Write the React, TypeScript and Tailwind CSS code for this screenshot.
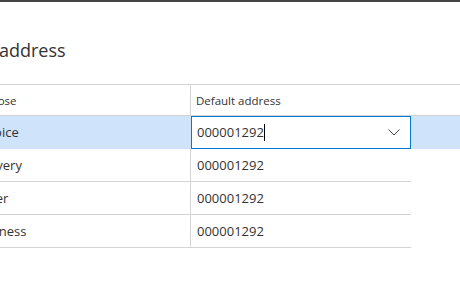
const rows = [
  { purpose: 'Delivery', address: '000001292' },
  { purpose: 'Other', address: '000001292' },
  { purpose: 'Business', address: '000001292' },
];

function Chevron() {
  return (
    <svg width="12" height="7" viewBox="0 0 12 7" fill="none" className="shrink-0">
      <path d="M0.5 0.5 L6 6 L11.5 0.5" stroke="#444" strokeWidth="1" />
    </svg>
  );
}

export default function App() {
  return (
    <div className="w-[460px] h-[289px] overflow-hidden bg-white font-['Open_Sans',sans-serif] text-[#333]">
      <div className="h-[2px] bg-[#454545]" />
      <div className="-ml-[60px] w-[520px]">
        <h1 className="mt-[36px] mb-[22px] -ml-[7px] text-[18px] leading-[24px] whitespace-nowrap">
          Default address
        </h1>

        {/* header */}
        <div className="flex border-y border-[#d4d4d4] h-[32px]">
          <div className="w-[230px] ml-[20px] pl-[12px] pt-[2px] text-[11.5px] leading-[28px]">Purpose</div>
          <div className="w-[221px] border-l border-[#d4d4d4] pl-[5px] pt-[2px] text-[11.5px] leading-[28px]">
            Default address
          </div>
        </div>

        {/* selected row */}
        <div className="flex h-[33px] bg-[#cfe3fa]">
          <div className="w-[231px] ml-[20px] pl-[16px] text-[13px] leading-[33px]">Invoice</div>
          <div className="w-[220px] h-[33px] border border-[#0078d4] bg-white flex items-center pl-[5px] pr-[10px]">
            <span className="text-[13px] leading-[31px]">000001292</span>
            <span className="w-px h-[17px] bg-black" />
            <span className="flex-1" />
            <Chevron />
          </div>
        </div>

        {rows.map((r) => (
          <div key={r.purpose} className="flex ml-[20px] w-[451px] h-[33px] border-b border-[#d4d4d4]">
            <div className="w-[230px] pl-[13px] text-[13px] leading-[32px]">{r.purpose}</div>
            <div className="flex-1 border-l border-[#d4d4d4] pl-[6px] text-[13px] leading-[32px]">{r.address}</div>
          </div>
        ))}
      </div>
    </div>
  );
}
